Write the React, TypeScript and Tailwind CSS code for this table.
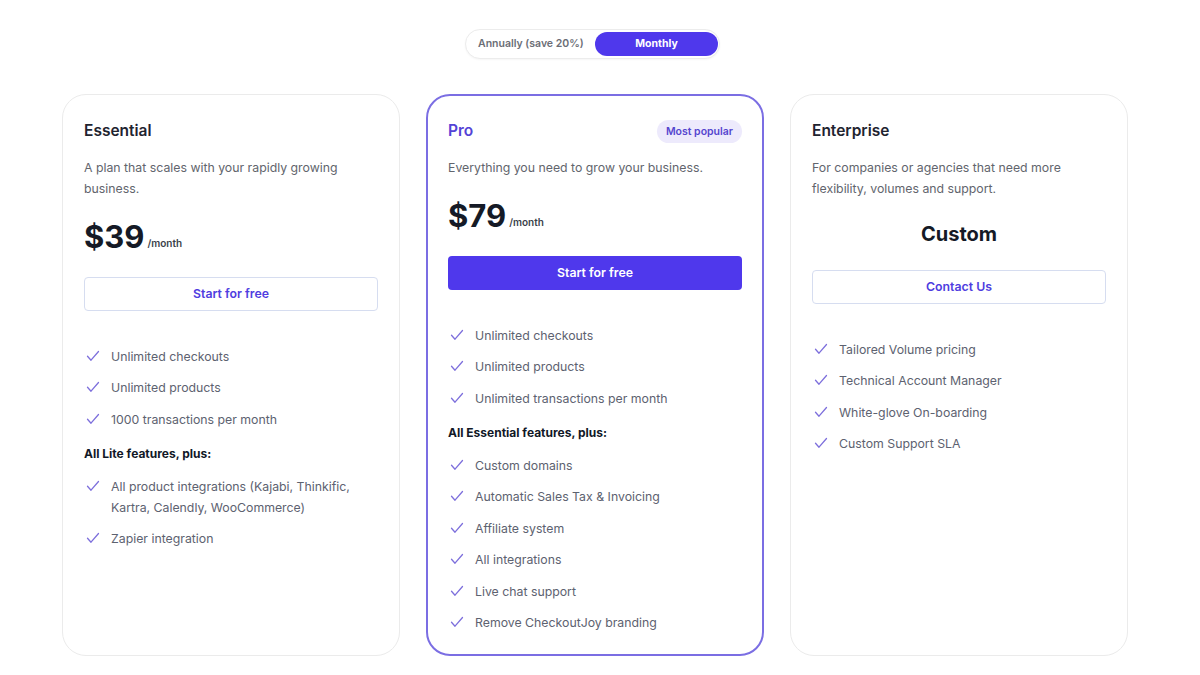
const Check = () => (
  <svg width="14" height="14" viewBox="0 0 14 14" fill="none" className="mt-[3px] ml-[2px] shrink-0">
    <path d="M1.5 7.2 L5 11.2 L12.5 2.5" stroke="#7d6fdc" strokeWidth="1.3" strokeLinecap="round" strokeLinejoin="round" />
  </svg>
)

const FeatureList = ({ items }: { items: (string | { heading: string })[] }) => (
  <ul className="mt-[34.5px] flex flex-col">
    {items.map((item, i) =>
      typeof item === 'string' ? (
        <li key={i} className="flex gap-[11px] text-[12.3px] leading-[21px] text-[#5d6270] [&:not(:first-child)]:mt-[10.5px]">
          <Check />
          <span>{item}</span>
        </li>
      ) : (
        <li key={i} className="mt-[13px] mb-[1.5px] text-[12px] leading-[21px] font-bold text-[#111827]">
          {item.heading}
        </li>
      )
    )}
  </ul>
)

const App = () => {
  return (
    <div className="min-h-[675px] w-[1200px] bg-white font-['Inter',sans-serif] text-[#1f2430]">
      {/* billing toggle */}
      <div className="flex pt-[29px] pl-[465px]">
        <div className="flex h-[30px] w-[255px] items-center rounded-full border border-[#ececec] bg-white pl-[12px] pr-[1px] shadow-[0_1px_2px_rgba(0,0,0,0.04)]">
          <span className="text-[10.5px] font-semibold text-[#6b6e76]">Annually (save 20%)</span>
          <button
            type="button"
            className="ml-auto h-[24px] w-[123px] rounded-full bg-[#4f38ec] text-[10.5px] font-bold text-white"
          >
            Monthly
          </button>
        </div>
      </div>

      {/* plans */}
      <div className="mt-[35px] flex gap-[26px] pl-[62px]">
        {/* Essential */}
        <div className="h-[562px] w-[338px] rounded-[24px] border border-[#ebebeb] px-[21px] pt-[24px]">
          <h3 className="text-[15.5px] leading-[24px] font-semibold text-[#1f2430]">Essential</h3>
          <p className="mt-[14px] text-[12.3px] leading-[21px] text-[#62656d]">
            A plan that scales with your rapidly growing business.
          </p>
          <div className="mt-[18px] flex h-[40px] items-end gap-[3px]">
            <span className="text-[31px] leading-[40px] font-bold text-[#151a26]">$39</span>
            <span className="mb-[6px] text-[10px] font-semibold text-[#3b3f4a]">/month</span>
          </div>
          <button
            type="button"
            className="mt-[20px] h-[34px] w-full rounded-[4px] border border-[#d6ddf0] text-[12.3px] font-semibold text-[#4f3de0]"
          >
            Start for free
          </button>
          <FeatureList
            items={[
              'Unlimited checkouts',
              'Unlimited products',
              '1000 transactions per month',
              { heading: 'All Lite features, plus:' },
              'All product integrations (Kajabi, Thinkific, Kartra, Calendly, WooCommerce)',
              'Zapier integration',
            ]}
          />
        </div>

        {/* Pro */}
        <div className="h-[562px] w-[338px] rounded-[24px] border-2 border-[#7b6ee3] px-[20px] pt-[23px]">
          <div className="flex h-[24px] items-center justify-between">
            <h3 className="text-[15.5px] leading-[24px] font-semibold text-[#5443d6]">Pro</h3>
            <span className="rounded-full bg-[#edeafc] px-[9px] py-[4px] text-[10.5px] leading-[15px] font-semibold text-[#5546cf]">
              Most popular
            </span>
          </div>
          <p className="mt-[14px] text-[12.3px] leading-[21px] text-[#62656d]">
            Everything you need to grow your business.
          </p>
          <div className="mt-[18px] flex h-[40px] items-end gap-[3px]">
            <span className="text-[31px] leading-[40px] font-bold text-[#151a26]">$79</span>
            <span className="mb-[6px] text-[10px] font-semibold text-[#3b3f4a]">/month</span>
          </div>
          <button
            type="button"
            className="mt-[20px] h-[34px] w-full rounded-[4px] bg-[#4f38ec] text-[12.3px] font-semibold text-white"
          >
            Start for free
          </button>
          <FeatureList
            items={[
              'Unlimited checkouts',
              'Unlimited products',
              'Unlimited transactions per month',
              { heading: 'All Essential features, plus:' },
              'Custom domains',
              'Automatic Sales Tax & Invoicing',
              'Affiliate system',
              'All integrations',
              'Live chat support',
              'Remove CheckoutJoy branding',
            ]}
          />
        </div>

        {/* Enterprise */}
        <div className="h-[562px] w-[338px] rounded-[24px] border border-[#ebebeb] px-[21px] pt-[24px]">
          <h3 className="text-[15.5px] leading-[24px] font-semibold text-[#1f2430]">Enterprise</h3>
          <p className="mt-[14px] text-[12.3px] leading-[21px] text-[#62656d]">
            For companies or agencies that need more flexibility, volumes and support.
          </p>
          <div className="mt-[21px] text-center text-[20px] leading-[28px] font-bold text-[#151a26]">Custom</div>
          <button
            type="button"
            className="mt-[22px] h-[34px] w-full rounded-[4px] border border-[#d6ddf0] text-[12.3px] font-semibold text-[#4f3de0]"
          >
            Contact Us
          </button>
          <FeatureList
            items={[
              'Tailored Volume pricing',
              'Technical Account Manager',
              'White-glove On-boarding',
              'Custom Support SLA',
            ]}
          />
        </div>
      </div>
    </div>
  )
}

export default App
